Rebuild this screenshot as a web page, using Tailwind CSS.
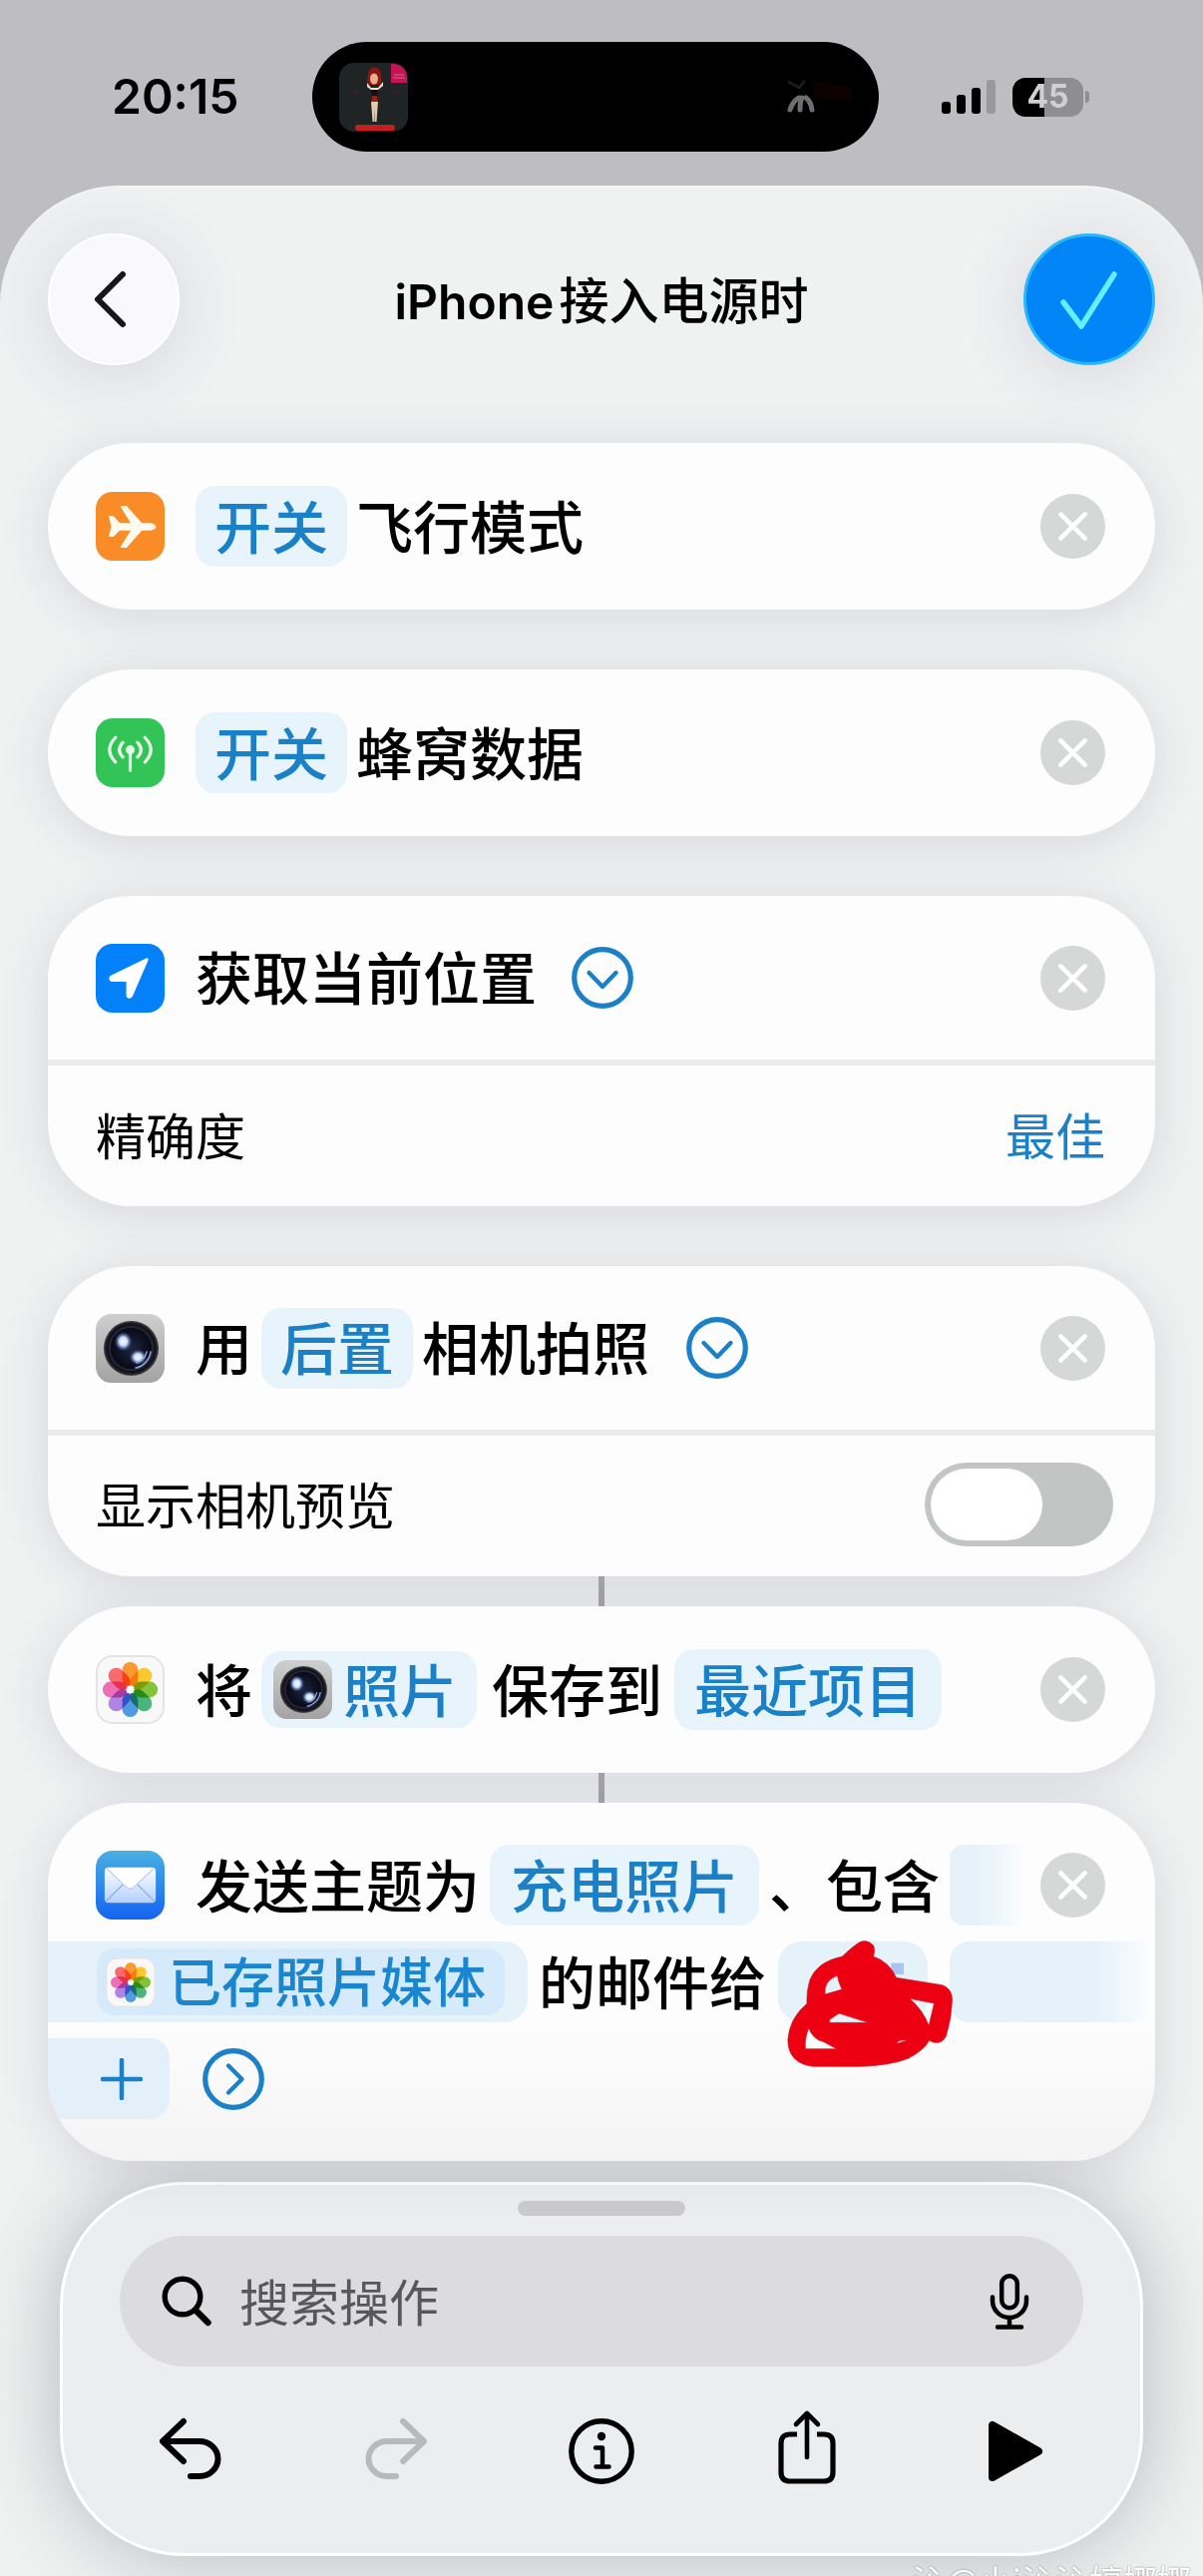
<!DOCTYPE html>
<html lang="zh-CN">
<head>
<meta charset="utf-8">
<meta name="viewport" content="width=device-width, initial-scale=1">
<title>iPhone接入电源时</title>
<script src="https://cdn.jsdelivr.net/npm/@tailwindcss/browser@4"></script>
</head>
<body class="bg-[#bdbdc2] font-['Noto_Sans_CJK_SC',sans-serif] leading-none text-black">

<!-- Shared icons -->
<svg class="absolute size-0" aria-hidden="true">
  <defs>
    <linearGradient id="g-cam" x1="0" y1="0" x2="0" y2="1"><stop offset="0" stop-color="#cfcfcf"/><stop offset="1" stop-color="#a3a3a3"/></linearGradient>
    <radialGradient id="g-lens" cx=".5" cy=".5" r=".5"><stop offset="0" stop-color="#1c2440"/><stop offset=".7" stop-color="#0a0b18"/><stop offset=".9" stop-color="#15161c"/><stop offset="1" stop-color="#4a4a4c"/></radialGradient>
    <radialGradient id="g-glow"><stop offset="0" stop-color="#fff"/><stop offset=".45" stop-color="#c9dcff"/><stop offset="1" stop-color="#3c62b8" stop-opacity="0"/></radialGradient>
    <linearGradient id="g-mail" x1="0" y1="0" x2="0" y2="1"><stop offset="0" stop-color="#48b0e2"/><stop offset="1" stop-color="#1463f2"/></linearGradient>
    <linearGradient id="g-env" x1="0" y1="0" x2="0" y2="1"><stop offset="0" stop-color="#fff"/><stop offset="1" stop-color="#b4d0fa"/></linearGradient>
  </defs>
  <symbol id="i-camera" viewBox="0 0 70 70">
    <rect width="70" height="70" rx="16" fill="url(#g-cam)"/>
    <circle cx="36" cy="35" r="28" fill="url(#g-lens)"/>
    <circle cx="36" cy="35" r="22" fill="none" stroke="#24263a" stroke-width="2"/>
    <ellipse cx="28" cy="28" rx="9" ry="10" fill="url(#g-glow)"/>
    <ellipse cx="43" cy="44" rx="9" ry="8" fill="url(#g-glow)"/>
    <path d="M56 38a20 20 0 0 1-16 17M52 38a16 16 0 0 1-11 12" fill="none" stroke="#8ea6d8" stroke-width="1.5"/>
  </symbol>
  <symbol id="i-photos" viewBox="0 0 70 70">
    <rect x="1" y="1" width="68" height="68" rx="16" fill="#f8f8f8" stroke="#e4e4e5" stroke-width="2"/>
    <g style="isolation:isolate">
      <g fill-opacity=".9">
        <rect x="27" y="7" width="16" height="25" rx="8" fill="#fb8e1a" style="mix-blend-mode:multiply"/>
        <rect x="27" y="7" width="16" height="25" rx="8" fill="#fbc314" transform="rotate(45 35 35)" style="mix-blend-mode:multiply"/>
        <rect x="27" y="7" width="16" height="25" rx="8" fill="#76bd22" transform="rotate(90 35 35)" style="mix-blend-mode:multiply"/>
        <rect x="27" y="7" width="16" height="25" rx="8" fill="#37ad68" transform="rotate(135 35 35)" style="mix-blend-mode:multiply"/>
        <rect x="27" y="7" width="16" height="25" rx="8" fill="#3c8fe0" transform="rotate(180 35 35)" style="mix-blend-mode:multiply"/>
        <rect x="27" y="7" width="16" height="25" rx="8" fill="#a678e0" transform="rotate(225 35 35)" style="mix-blend-mode:multiply"/>
        <rect x="27" y="7" width="16" height="25" rx="8" fill="#ea5fae" transform="rotate(270 35 35)" style="mix-blend-mode:multiply"/>
        <rect x="27" y="7" width="16" height="25" rx="8" fill="#fb5a5c" transform="rotate(315 35 35)" style="mix-blend-mode:multiply"/>
      </g>
    </g>
    <circle cx="35" cy="35" r="4" fill="#fff"/>
  </symbol>
  <symbol id="i-close" viewBox="0 0 64 64">
    <circle cx="32" cy="32" r="32" fill="#d6d7d7"/>
    <path d="M20 20l24 24M44 20L20 44" fill="none" stroke="#fff" stroke-width="4.5" stroke-linecap="round"/>
  </symbol>
  <symbol id="i-down" viewBox="0 0 62 62">
    <circle cx="31" cy="31" r="28.3" fill="none" stroke="currentColor" stroke-width="5.2"/>
    <path d="M17.500 26l13.500 14 13.500-14" fill="none" stroke="currentColor" stroke-width="4.400" stroke-linecap="round" stroke-linejoin="round"/>
  </symbol>
  <symbol id="i-right" viewBox="0 0 62 62">
    <circle cx="31" cy="31" r="28.3" fill="none" stroke="currentColor" stroke-width="5.2"/>
    <path d="M26 17.500l13.500 13.500L26 44.500" fill="none" stroke="currentColor" stroke-width="4.400" stroke-linecap="round" stroke-linejoin="round"/>
  </symbol>
</svg>

<!-- Status bar -->
<div class="grid grid-cols-[313px_1fr_325px] items-center pt-[42px] pb-[34px]">
  <time class="pl-[112px] font-['Inter',sans-serif] text-[48px] font-semibold">20:15</time>
  <div class="flex h-[110px] items-center justify-between rounded-full bg-black pr-[20px] pl-[27px]">
    <svg class="size-[69px]" viewBox="0 0 69 69" aria-hidden="true">
      <rect width="69" height="69" rx="15" fill="#1f2424"/>
      <path d="M52 1h3a14 14 0 0 1 13 13v6H52z" fill="#c41552"/>
      <path d="M55 12h10M54 15h12" stroke="#e0608c" stroke-width="1"/>
      <path d="M29 12c0-10 13-10 13 0 1 5 1 8-1 10H30c-2-2-2-5-1-10z" fill="#8c1712"/>
      <ellipse cx="35" cy="16" rx="4" ry="5.500" fill="#e8b08a"/>
      <path d="M28 20l4 5h7l5-6v4l-5 4h-7l-4-3z" fill="#eee2d8"/>
      <path d="M32 27h7l-1 6 2 7h-9l2-7z" fill="#15100f"/>
      <path d="M33 33h5l1 6h-7z" fill="#9a1f1a"/>
      <path d="M32 39l1.500 20h2L35 45l1 14h1.500L39 39z" fill="#e3c9b2"/>
      <path d="M14 30l6 1M55 30l6 1" stroke="#5a1516" stroke-width="1.500"/>
      <rect x="16" y="62" width="40" height="6" rx="3" fill="#c4201f"/>
    </svg>
    <svg class="h-[40px] w-[76px]" viewBox="0 0 76 40" aria-hidden="true">
      <path d="M30 4l38 6v12H32z" fill="#0c0202"/>
      <path d="M7 33q3-9 9-12M17 33q0-8 2-12M29 33q-1-8-6-12" fill="none" stroke="#6f6f72" stroke-width="5" stroke-linecap="round"/>
      <path d="M5 5l10 5M22 4l-7 8" stroke="#1c1c1d" stroke-width="3"/>
    </svg>
  </div>
  <div class="flex items-center gap-[17px] pl-[63px]">
    <svg class="h-[36px] w-[54px]" viewBox="0 0 54 36" role="img" aria-label="信号">
      <rect x="0" y="23" width="9" height="12" rx="3"/><rect x="15" y="16" width="9" height="19" rx="3"/><rect x="30" y="9" width="9" height="26" rx="3"/><rect x="45" y="1" width="9" height="34" rx="3" fill="#99999c"/>
    </svg>
    <div class="flex items-center gap-[2px]">
      <div class="flex h-[39px] w-[71px] items-center justify-center rounded-[13px] bg-linear-to-r from-black from-45% to-[#8e8e92] to-45% font-['Inter',sans-serif] text-[32px] font-bold text-[#d0d0d4]">45</div>
      <div class="h-[12px] w-[4px] rounded-r-full bg-[#8e8e92]"></div>
    </div>
  </div>
</div>

<div class="overflow-hidden rounded-t-[120px] border-t-2 border-[#f5f5f6] bg-[#f0f1f1]">
  <header class="flex items-center justify-between px-12 pt-[46px]">
    <button class="flex size-[132px] items-center justify-center rounded-full border-2 border-white bg-[#f9f9fd] pr-[6px] shadow-[0_8px_70px_rgba(60,60,110,0.14)]" aria-label="返回">
      <svg class="size-[60px]" viewBox="0 0 60 60"><path d="M42 5L17 30l25 25" fill="none" stroke="#17171b" stroke-width="6" stroke-linecap="round" stroke-linejoin="round"/></svg>
    </button>
    <h1 class="flex items-baseline gap-[5px] text-[50px] font-medium"><span class="font-['Inter',sans-serif] text-[48px] font-semibold">iPhone</span>接入电源时</h1>
    <button class="flex size-[132px] items-center justify-center rounded-full border-3 border-[#26b8fb] bg-[#0285f6] shadow-[0_8px_70px_rgba(60,60,110,0.14)]" aria-label="完成">
      <svg class="size-[60px]" viewBox="0 0 60 60"><path d="M4 33l18 24L55 5" fill="none" stroke="#63f0fb" stroke-width="5.500" stroke-linecap="round" stroke-linejoin="round"/></svg>
    </button>
  </header>

  <main class="flex flex-col px-12 pt-[78px] text-[57px] font-medium">

    <section class="mb-[60px] flex items-center rounded-[84px] bg-[#fdfdfd] py-[43px] pr-[50px] pl-12 shadow-[0_6px_50px_rgba(50,50,90,0.13)]">
      <svg class="mr-[31px] size-[69px]" viewBox="0 0 70 70" aria-hidden="true">
        <rect width="70" height="70" rx="17" fill="#fa8c28"/>
        <path d="M14 25h3.500l6.500 7.500h13L26 15h5l15.500 17.500h9q5 1 5 3t-5 3h-9L31 56h-5l11-17.500H24L17.500 45H14l2.500-9.500z" fill="#fffaf0" stroke="#fffaf0" stroke-width="1.500" stroke-linejoin="round"/>
      </svg>
      <button class="mr-[9px] h-[81px] rounded-[20px] bg-[#e8f4fc] px-[19px] pb-[5px] text-[#1a80c8]">开关</button>
      <h2 class="pb-[5px]">飞行模式</h2>
      <button class="ml-auto" aria-label="移除"><svg class="size-[65px]"><use href="#i-close"/></svg></button>
    </section>

    <section class="mb-[60px] flex items-center rounded-[84px] bg-[#fdfdfd] py-[43px] pr-[50px] pl-12 shadow-[0_6px_50px_rgba(50,50,90,0.13)]">
      <svg class="mr-[31px] size-[69px]" viewBox="0 0 70 70" aria-hidden="true">
        <rect width="70" height="70" rx="17" fill="#32c456"/>
        <g fill="none" stroke="#e9fbe9" stroke-width="3.200" stroke-linecap="round">
          <path d="M35 33v20M27.500 24.500q-7 7.500 0 15M42.500 24.500q7 7.500 0 15M20 19.500q-12 12.500 0 25M50 19.500q12 12.500 0 25"/>
        </g>
        <circle cx="35" cy="32" r="4.500" fill="#e9fbe9"/>
      </svg>
      <button class="mr-[9px] h-[81px] rounded-[20px] bg-[#e8f4fc] px-[19px] pb-[5px] text-[#1a80c8]">开关</button>
      <h2 class="pb-[5px]">蜂窝数据</h2>
      <button class="ml-auto" aria-label="移除"><svg class="size-[65px]"><use href="#i-close"/></svg></button>
    </section>

    <section class="mb-[60px] rounded-[84px] bg-[#fdfdfd] shadow-[0_6px_50px_rgba(50,50,90,0.13)]">
      <div class="flex h-[170px] items-center border-b-6 border-[#ebebeb] pr-[50px] pl-12">
        <svg class="mr-[31px] size-[69px]" viewBox="0 0 70 70" aria-hidden="true">
          <rect width="70" height="70" rx="17" fill="#0381fa"/>
          <path d="M52 16L36 53q-2 2-3.500 0V38q0-1-1.500-1H16q-2-2 0-3.500z" fill="#fff" stroke="#fff" stroke-width="3" stroke-linejoin="round"/>
        </svg>
        <h2 class="pb-[5px]">获取当前位置</h2>
        <button class="ml-[35px] text-[#1a80c8]" aria-label="收起"><svg class="size-[62px]"><use href="#i-down"/></svg></button>
        <button class="ml-auto" aria-label="移除"><svg class="size-[65px]"><use href="#i-close"/></svg></button>
      </div>
      <div class="flex h-[141px] items-center justify-between pr-[50px] pb-[6px] pl-12 text-[50px] font-normal">
        <span>精确度</span>
        <button class="text-[#1a80c8]">最佳</button>
      </div>
    </section>

    <section class="rounded-[84px] bg-[#fdfdfd] shadow-[0_6px_50px_rgba(50,50,90,0.13)]">
      <div class="flex h-[170px] items-center border-b-6 border-[#ebebeb] pr-[50px] pl-12">
        <svg class="mr-[31px] size-[69px]" aria-hidden="true"><use href="#i-camera"/></svg>
        <h2 class="flex items-center gap-[9px]"><span class="pb-[5px]">用</span><button class="h-[81px] rounded-[20px] bg-[#e8f4fc] px-[19px] pb-[5px] text-[#1a80c8]">后置</button><span class="pb-[5px]">相机拍照</span></h2>
        <button class="ml-[37px] text-[#1a80c8]" aria-label="收起"><svg class="size-[62px]"><use href="#i-down"/></svg></button>
        <button class="ml-auto" aria-label="移除"><svg class="size-[65px]"><use href="#i-close"/></svg></button>
      </div>
      <div class="flex h-[141px] items-center justify-between pr-[42px] pb-[3px] pl-12 text-[50px] font-normal">
        <label for="preview" class="pb-[4px]">显示相机预览</label>
        <input id="preview" type="checkbox" role="switch" class="flex h-[84px] w-[189px] appearance-none rounded-full bg-[#c3c4c4] p-[6px] before:h-[72px] before:w-[112px] before:rounded-full before:bg-white checked:justify-end checked:bg-[#34c759]">
      </div>
    </section>

    <div class="h-[30px] w-[6px] self-center bg-[#a3a3a7]"></div>

    <section class="flex items-center rounded-[84px] bg-[#fdfdfd] py-[43px] pr-[50px] pl-12 shadow-[0_6px_50px_rgba(50,50,90,0.13)]">
      <svg class="mr-[31px] size-[69px]" aria-hidden="true"><use href="#i-photos"/></svg>
      <h2 class="flex items-center"><span class="pb-[5px]">将</span><button class="mr-[15px] ml-[9px] flex h-[77px] items-center rounded-[20px] bg-[#e8f4fc] pr-[20px] pl-[12px] text-[#1a80c8]"><svg class="mr-[11px] size-[59px]" aria-hidden="true"><use href="#i-camera"/></svg><span class="pb-[5px]">照片</span></button><span class="pb-[5px]">保存到</span><button class="ml-[12px] h-[81px] rounded-[20px] bg-[#e8f4fc] px-[20px] pb-[5px] text-[#1a80c8]">最近项目</button></h2>
      <button class="ml-auto" aria-label="移除"><svg class="size-[65px]"><use href="#i-close"/></svg></button>
    </section>

    <div class="h-[30px] w-[6px] self-center bg-[#a3a3a7]"></div>

    <section class="flex flex-col gap-[16px] overflow-hidden rounded-[84px] bg-linear-to-b from-[#fdfdfd] from-60% to-[#f4f4f4] pt-[42px] pb-[42px] shadow-[0_6px_50px_rgba(50,50,90,0.13)]">
      <div class="flex h-[81px] items-center pr-[50px] pl-12">
        <svg class="mr-[31px] size-[69px] shrink-0" viewBox="0 0 70 70" aria-hidden="true">
          <rect width="70" height="70" rx="17" fill="url(#g-mail)"/>
          <rect x="9" y="17" width="52" height="36" rx="4" fill="url(#g-env)"/>
          <path d="M11 51l18-18M59 51L41 33" stroke="#8fb4ea" stroke-width="1.500"/>
          <path d="M11 18l20 19q4 3 8 0l20-19" fill="#fff" stroke="#c3d3ea" stroke-width="1.500"/>
        </svg>
        <span class="pb-[5px] whitespace-nowrap">发送主题为</span>
        <button class="mx-[10px] h-[81px] rounded-[20px] bg-[#e8f4fc] px-[21px] pb-[5px] whitespace-nowrap text-[#1a80c8]">充电照片</button>
        <span class="pb-[5px] whitespace-nowrap">、包含</span>
        <span class="mr-[19px] ml-[10px] h-[81px] flex-1 rounded-l-[14px] bg-linear-to-r from-[#e6f2fa] from-40% to-[#fafcfe]"></span>
        <button aria-label="移除"><svg class="size-[65px]"><use href="#i-close"/></svg></button>
      </div>
      <div class="flex h-[81px] items-center">
        <span class="mr-[11px] flex h-[81px] items-center rounded-r-[24px] bg-[#e6f2fa] pr-[23px] pl-[49px]">
          <button class="flex h-[67px] items-center gap-[13px] rounded-[18px] bg-[#d5eafa] pr-[19px] pl-[9px] text-[53px] whitespace-nowrap text-[#1a86d0]"><svg class="size-[50px]" aria-hidden="true"><use href="#i-photos"/></svg><span class="pb-[4px]">已存照片媒体</span></button>
        </span>
        <span class="pb-[5px] whitespace-nowrap">的邮件给</span>
        <span class="relative ml-[12px] h-[81px] w-[150px] rounded-[24px] bg-[#e6f2fa]">
          <svg class="absolute top-[-3px] left-[7px] h-[130px] w-[170px]" viewBox="390 430 480 390" preserveAspectRatio="none" aria-hidden="true">
            <rect x="690" y="504" width="36" height="34" fill="#a9c4ee"/>
            <path fill="#ec0012" stroke="#c4202c" stroke-width="2" fill-rule="evenodd" d="M600 442Q622 430 641 452Q645 470 640 484Q685 500 705 548L835 570Q862 580 863 612Q862 670 845 725Q830 755 798 737Q785 765 740 790Q690 812 600 815H470Q398 805 398 735Q402 670 452 626Q450 590 460 555Q480 500 552 484Q580 455 600 442ZM503 598Q500 556 538 542Q542 565 551 583ZM516 674L543 655L625 683H516ZM457 700Q470 735 500 741L536 762H448Q444 735 457 700ZM743 611L812 625L797 692Q780 645 743 611ZM706 746Q710 733 736 737Z"/>
          </svg>
        </span>
        <span class="mr-[8px] ml-[22px] h-[81px] flex-1 rounded-l-[20px] bg-linear-to-r from-[#e6f2fa] from-75% to-[#fafcfe]"></span>
      </div>
      <div class="flex h-[81px] items-center">
        <button class="flex h-[81px] items-center rounded-r-[20px] bg-[#e4f0f9] pr-[27px] pl-[53px] text-[#1a80c8]" aria-label="添加"><svg class="size-[42px]" viewBox="0 0 42 42"><path d="M21 2v38M2 21h38" stroke="currentColor" stroke-width="4.500" stroke-linecap="round"/></svg></button>
        <button class="ml-[33px] text-[#1a80c8]" aria-label="展开"><svg class="size-[62px]"><use href="#i-right"/></svg></button>
      </div>
    </section>
  </main>

  <footer class="px-[60px] pt-[21px]">
    <div class="flex flex-col items-center rounded-[124px] border-3 border-white bg-[#ecedef] px-[57px] pt-[16px] pb-[68px] shadow-[0_0_80px_rgba(50,50,60,0.30)]">
      <div class="h-[15px] w-[168px] rounded-full bg-[#c9c9cc]"></div>
      <div class="mt-[20px] flex h-[131px] w-full items-center rounded-full bg-[#dcdcde] pr-[54px] pl-[42px]">
        <label for="search" aria-label="搜索操作"><svg class="size-[51px]" viewBox="0 0 51 51"><circle cx="21" cy="21" r="17.800" fill="none" stroke="#000" stroke-width="5.400"/><path d="M34 34.500L46.500 47" stroke="#000" stroke-width="6.400" stroke-linecap="round"/></svg></label>
        <input id="search" type="search" placeholder="搜索操作" class="ml-[27px] h-[80px] min-w-0 flex-1 bg-transparent pb-[4px] text-[50px] outline-none placeholder:text-[#58585c]">
        <button aria-label="听写"><svg class="h-[56px] w-[40px]" viewBox="0 0 40 56" fill="none" stroke="#000" stroke-width="4.500" stroke-linecap="round"><rect x="12.200" y="2.300" width="15.600" height="32" rx="7.800"/><path d="M3 23.500v3.500a17 17 0 0 0 34 0v-3.500M20 44v9.500M8 53.500h24"/></svg></button>
      </div>
      <nav class="mt-[39px] grid w-[1030px] max-w-none grid-cols-5 justify-items-center">
        <button aria-label="撤销"><svg class="h-[80px] w-[64px]" viewBox="0 0 64 80" fill="none" stroke="#000" stroke-width="6" stroke-linecap="round" stroke-linejoin="round"><path d="M25 16L4 36l21 20M5 36h36a18.500 17.500 0 0 1 0 35H32"/></svg></button>
        <button aria-label="重做" disabled><svg class="h-[80px] w-[64px]" viewBox="0 0 64 80" fill="none" stroke="#b9b9bd" stroke-width="6" stroke-linecap="round" stroke-linejoin="round"><path d="M39 16l21 20-21 20M59 36H23a18.500 17.500 0 0 0 0 35h9"/></svg></button>
        <button aria-label="信息"><svg class="h-[80px] w-[66px]" viewBox="0 0 66 80"><circle cx="33" cy="46" r="30.200" fill="none" stroke="#000" stroke-width="5.400"/><circle cx="33" cy="31" r="4.200"/><path d="M27 42.500h7v19M27.500 61.500h13" fill="none" stroke="#000" stroke-width="4.500" stroke-linecap="round" stroke-linejoin="round"/></svg></button>
        <button aria-label="共享"><svg class="h-[80px] w-[60px]" viewBox="0 0 60 80" fill="none" stroke="#000" stroke-width="5.200" stroke-linecap="round" stroke-linejoin="round"><path d="M20 29h-7q-9 0-9 9v29q0 9 9 9h34q9 0 9-9V38q0-9-9-9h-7" stroke-linecap="butt"/><path d="M30 9v43M19 19L30 8l11 11" stroke-width="4.600"/></svg></button>
        <button class="pl-[6px]" aria-label="运行"><svg class="h-[80px] w-[56px]" viewBox="0 0 56 80"><path d="M5 20v52l46-26z" stroke="#000" stroke-width="8" stroke-linejoin="round"/></svg></button>
      </nav>
    </div>
  </footer>
  <p class="h-[20px] overflow-hidden pt-[8px] pr-[12px] text-right text-[34px] text-white [text-shadow:0_0_2px_#77777a]">沁@小i沁沁婷娜娜</p>
</div>
</body>
</html>
